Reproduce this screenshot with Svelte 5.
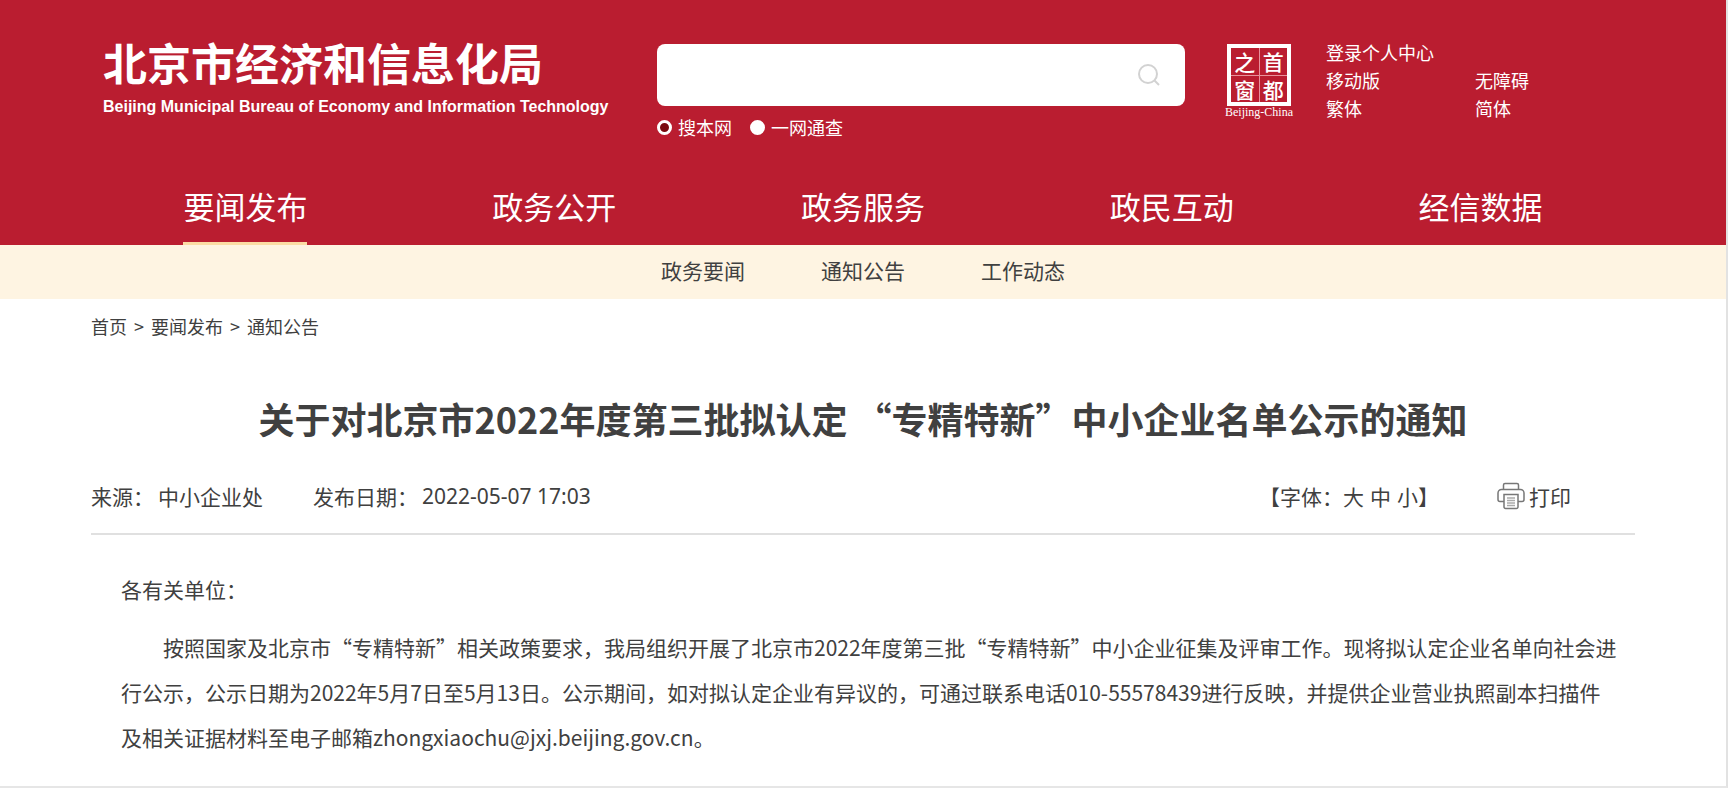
<script lang="ts">
  interface NavItem {
    label: string;
    href: string;
  }

  const navItems: NavItem[] = [
    { label: '要闻发布', href: '#news' },
    { label: '政务公开', href: '#open' },
    { label: '政务服务', href: '#service' },
    { label: '政民互动', href: '#interact' },
    { label: '经信数据', href: '#data' }
  ];

  const subItems: NavItem[] = [
    { label: '政务要闻', href: '#zwyw' },
    { label: '通知公告', href: '#tzgg' },
    { label: '工作动态', href: '#gzdt' }
  ];

  const sizes = [
    { label: '大', value: 'large' },
    { label: '中', value: 'medium' },
    { label: '小', value: 'small' }
  ];

  let active = $state('要闻发布');
  let keyword = $state('');
  let scope = $state('site');
  let fontSize = $state('medium');
</script>

<div class="page">
  <header class="header">
    <div class="container top">
      <div class="brand">
        <div class="brand-name">北京市经济和信息化局</div>
        <div class="brand-en">Beijing Municipal Bureau of Economy and Information Technology</div>
      </div>

      <form class="search" onsubmit={(e) => e.preventDefault()}>
        <div class="search-box">
          <input type="text" aria-label="搜索" bind:value={keyword} />
          <button type="submit" aria-label="搜索">
            <svg viewBox="0 0 24 24" width="24" height="24">
              <circle cx="11" cy="11" r="9" />
              <path d="M17.5 17.5 22 22" />
            </svg>
          </button>
        </div>
        <div class="scopes">
          <label><input type="radio" name="scope" value="site" bind:group={scope} />搜本网</label>
          <label><input type="radio" name="scope" value="all" bind:group={scope} />一网通查</label>
        </div>
      </form>

      <!-- 首都之窗 -->
      <a class="capital" href="#capital">
        <span class="seal">
          <span>之</span><span>首</span>
          <span>窗</span><span>都</span>
        </span>
        <span class="seal-en">Beijing-China</span>
      </a>

      <div class="tools">
        <a class="wide" href="#login">登录个人中心</a>
        <a href="#mobile">移动版</a>
        <a href="#accessible">无障碍</a>
        <a href="#traditional">繁体</a>
        <a href="#simplified">简体</a>
      </div>
    </div>

    <nav class="container nav">
      {#each navItems as item}
        <a href={item.href} class:active={active === item.label} onclick={() => (active = item.label)}>
          {item.label}
        </a>
      {/each}
    </nav>
  </header>

  <nav class="subnav">
    {#each subItems as item}
      <a href={item.href}>{item.label}</a>
    {/each}
  </nav>

  <main class="container">
    <div class="crumbs">
      <a href="#home">首页</a>
      <span>&gt;</span>
      <a href="#news">要闻发布</a>
      <span>&gt;</span>
      <a href="#tzgg">通知公告</a>
    </div>

    <h1>关于对北京市2022年度第三批拟认定 “专精特新”中小企业名单公示的通知</h1>

    <div class="meta">
      <span>来源：</span>
      <span class="source">中小企业处</span>
      <span>发布日期：</span>
      <span class="date">2022-05-07 17:03</span>
      <div class="font-size">
        <span>【字体：</span>
        {#each sizes as size}
          <button type="button" onclick={() => (fontSize = size.value)}>{size.label}</button>
        {/each}
        <span>】</span>
      </div>
      <button type="button" class="print" onclick={() => window.print()}>
        <svg viewBox="0 0 28 28" width="28" height="28">
          <path d="M6.5 7V3a1.500 1.500 0 0 1 1.500-1.500h12A1.500 1.500 0 0 1 21.500 3v4" />
          <path d="M7 19.500H3a2 2 0 0 1-2-2V11a3.500 3.500 0 0 1 3.500-3.500h19A3.500 3.500 0 0 1 27 11v6.500a2 2 0 0 1-2 2h-4" />
          <path d="M7 12.500h14V25a1.500 1.500 0 0 1-1.500 1.500h-11A1.500 1.500 0 0 1 7 25z" />
          <path class="lines" d="M10 16h8M10 18.500h8M10 21h8M10 23.500h8" />
        </svg>
        打印
      </button>
    </div>

    <article class={fontSize}>
      <p>各有关单位：</p>
      <p class="indent">
        按照国家及北京市“专精特新”相关政策要求，我局组织开展了北京市2022年度第三批“专精特新”中小企业征集及评审工作。现将拟认定企业名单向社会进行公示，公示日期为2022年5月7日至5月13日。公示期间，如对拟认定企业有异议的，可通过联系电话010-55578439进行反映，并提供企业营业执照副本扫描件及相关证据材料至电子邮箱zhongxiaochu@jxj.beijing.gov.cn。
      </p>
    </article>
  </main>
</div>

<style>
  :global(body) {
    margin: 0;
    background: #fff;
  }

  .page {
    box-sizing: border-box;
    min-height: 100vh;
    border-right: 2px solid #e2e2e2;
    border-bottom: 2px solid #e6e6e6;
    font-family: 'Noto Sans CJK SC', sans-serif;
    color: #404040;
  }

  a {
    color: inherit;
    text-decoration: none;
  }

  button {
    padding: 0;
    border: 0;
    background: none;
    font: inherit;
    color: inherit;
    cursor: pointer;
  }

  .container {
    padding: 0 91px;
  }

  /* Header */
  .header {
    background: #ba1d30;
    color: #fff;
  }

  .top {
    display: flex;
    align-items: flex-start;
    padding-top: 38px;
    padding-bottom: 30px;
  }

  .brand {
    flex: 1;
    padding-left: 12px;
    white-space: nowrap;
  }

  .brand-name {
    font-size: 44px;
    font-weight: 700;
    line-height: 48px;
  }

  .brand-en {
    margin-top: 9px;
    font-family: 'Liberation Sans', Arial, sans-serif;
    font-size: 16px;
    font-weight: 700;
    line-height: 24px;
  }

  .search {
    width: 528px;
    margin: 6px 38px 0 0;
  }

  .search-box {
    display: flex;
    align-items: center;
    height: 62px;
    background: #fff;
    border-radius: 8px;
  }

  .search-box input {
    flex: 1;
    min-width: 0;
    padding: 0 20px;
    border: 0;
    outline: 0;
    background: none;
    font: inherit;
    font-size: 18px;
  }

  .search-box button {
    display: flex;
    padding: 0 24px;
  }

  .search-box svg {
    fill: none;
    stroke: #d2d2d2;
    stroke-width: 2;
  }

  .scopes {
    display: flex;
    gap: 18px;
    margin-top: 9px;
    font-size: 18px;
    line-height: 24px;
  }

  .scopes label {
    display: flex;
    align-items: center;
    gap: 6px;
  }

  .scopes input {
    appearance: none;
    box-sizing: border-box;
    width: 15px;
    height: 15px;
    margin: 0;
    border: 3px solid #fff;
    border-radius: 50%;
    background: #fff;
  }

  .scopes input:checked {
    background: #7a0a10;
  }

  /* 首都之窗 */
  .capital {
    display: flex;
    flex-direction: column;
    align-items: center;
    width: 72px;
    margin: 6px 31px 0 0;
  }

  .seal {
    box-sizing: border-box;
    display: grid;
    grid-template-columns: 1fr 1fr;
    gap: 1px;
    width: 64px;
    height: 62px;
    border: 4px solid #fff;
    background: #e8929b;
  }

  .seal span {
    display: flex;
    align-items: center;
    justify-content: center;
    background: #ba1d30;
    font-size: 21px;
    font-weight: 500;
    line-height: 26px;
  }

  .seal-en {
    font-family: 'Liberation Serif', serif;
    font-size: 12px;
    line-height: 12px;
  }

  .tools {
    display: grid;
    grid-template-columns: 149px 1fr;
    width: 309px;
    font-size: 18px;
    line-height: 28px;
  }

  .tools .wide {
    grid-column: span 2;
  }

  .nav {
    display: grid;
    grid-template-columns: repeat(5, 1fr);
    justify-items: center;
  }

  .nav a {
    box-sizing: border-box;
    height: 76px;
    font-size: 31px;
    line-height: 73px;
  }

  .nav a.active {
    border-bottom: 3px solid #fbdca4;
  }

  .subnav {
    display: flex;
    justify-content: center;
    gap: 76px;
    padding-bottom: 4px;
    background: #fef4e2;
    font-size: 21px;
    line-height: 50px;
  }

  /* Article */
  .crumbs {
    display: flex;
    gap: 7px;
    padding-top: 13px;
    font-size: 18px;
    line-height: 28px;
  }

  h1 {
    margin: 51px 0 0;
    font-size: 36px;
    line-height: 54px;
    text-align: center;
  }

  .meta {
    display: flex;
    align-items: center;
    gap: 4px;
    margin-top: 32px;
    padding: 0 64px 18px 0;
    border-bottom: 2px solid #e0e0e0;
    font-size: 21px;
    line-height: 38px;
  }

  .source {
    margin-right: 46px;
  }

  .date {
    font-family: 'Noto Sans', sans-serif;
  }

  .font-size {
    display: flex;
    margin-left: auto;
  }

  .font-size button + button {
    margin-left: 6px;
  }

  .print {
    display: flex;
    align-items: center;
    gap: 4px;
    margin-left: 54px;
  }

  .print svg {
    fill: none;
    stroke: #777;
    stroke-width: 1.5;
  }

  .print .lines {
    stroke: #aaa;
  }

  article {
    padding: 32px 16px 0 30px;
    font-size: 21px;
    line-height: 45px;
  }

  article.large {
    font-size: 24px;
  }

  article.small {
    font-size: 18px;
  }

  p {
    margin: 0 0 13px;
  }

  .indent {
    text-indent: 2em;
  }
</style>
